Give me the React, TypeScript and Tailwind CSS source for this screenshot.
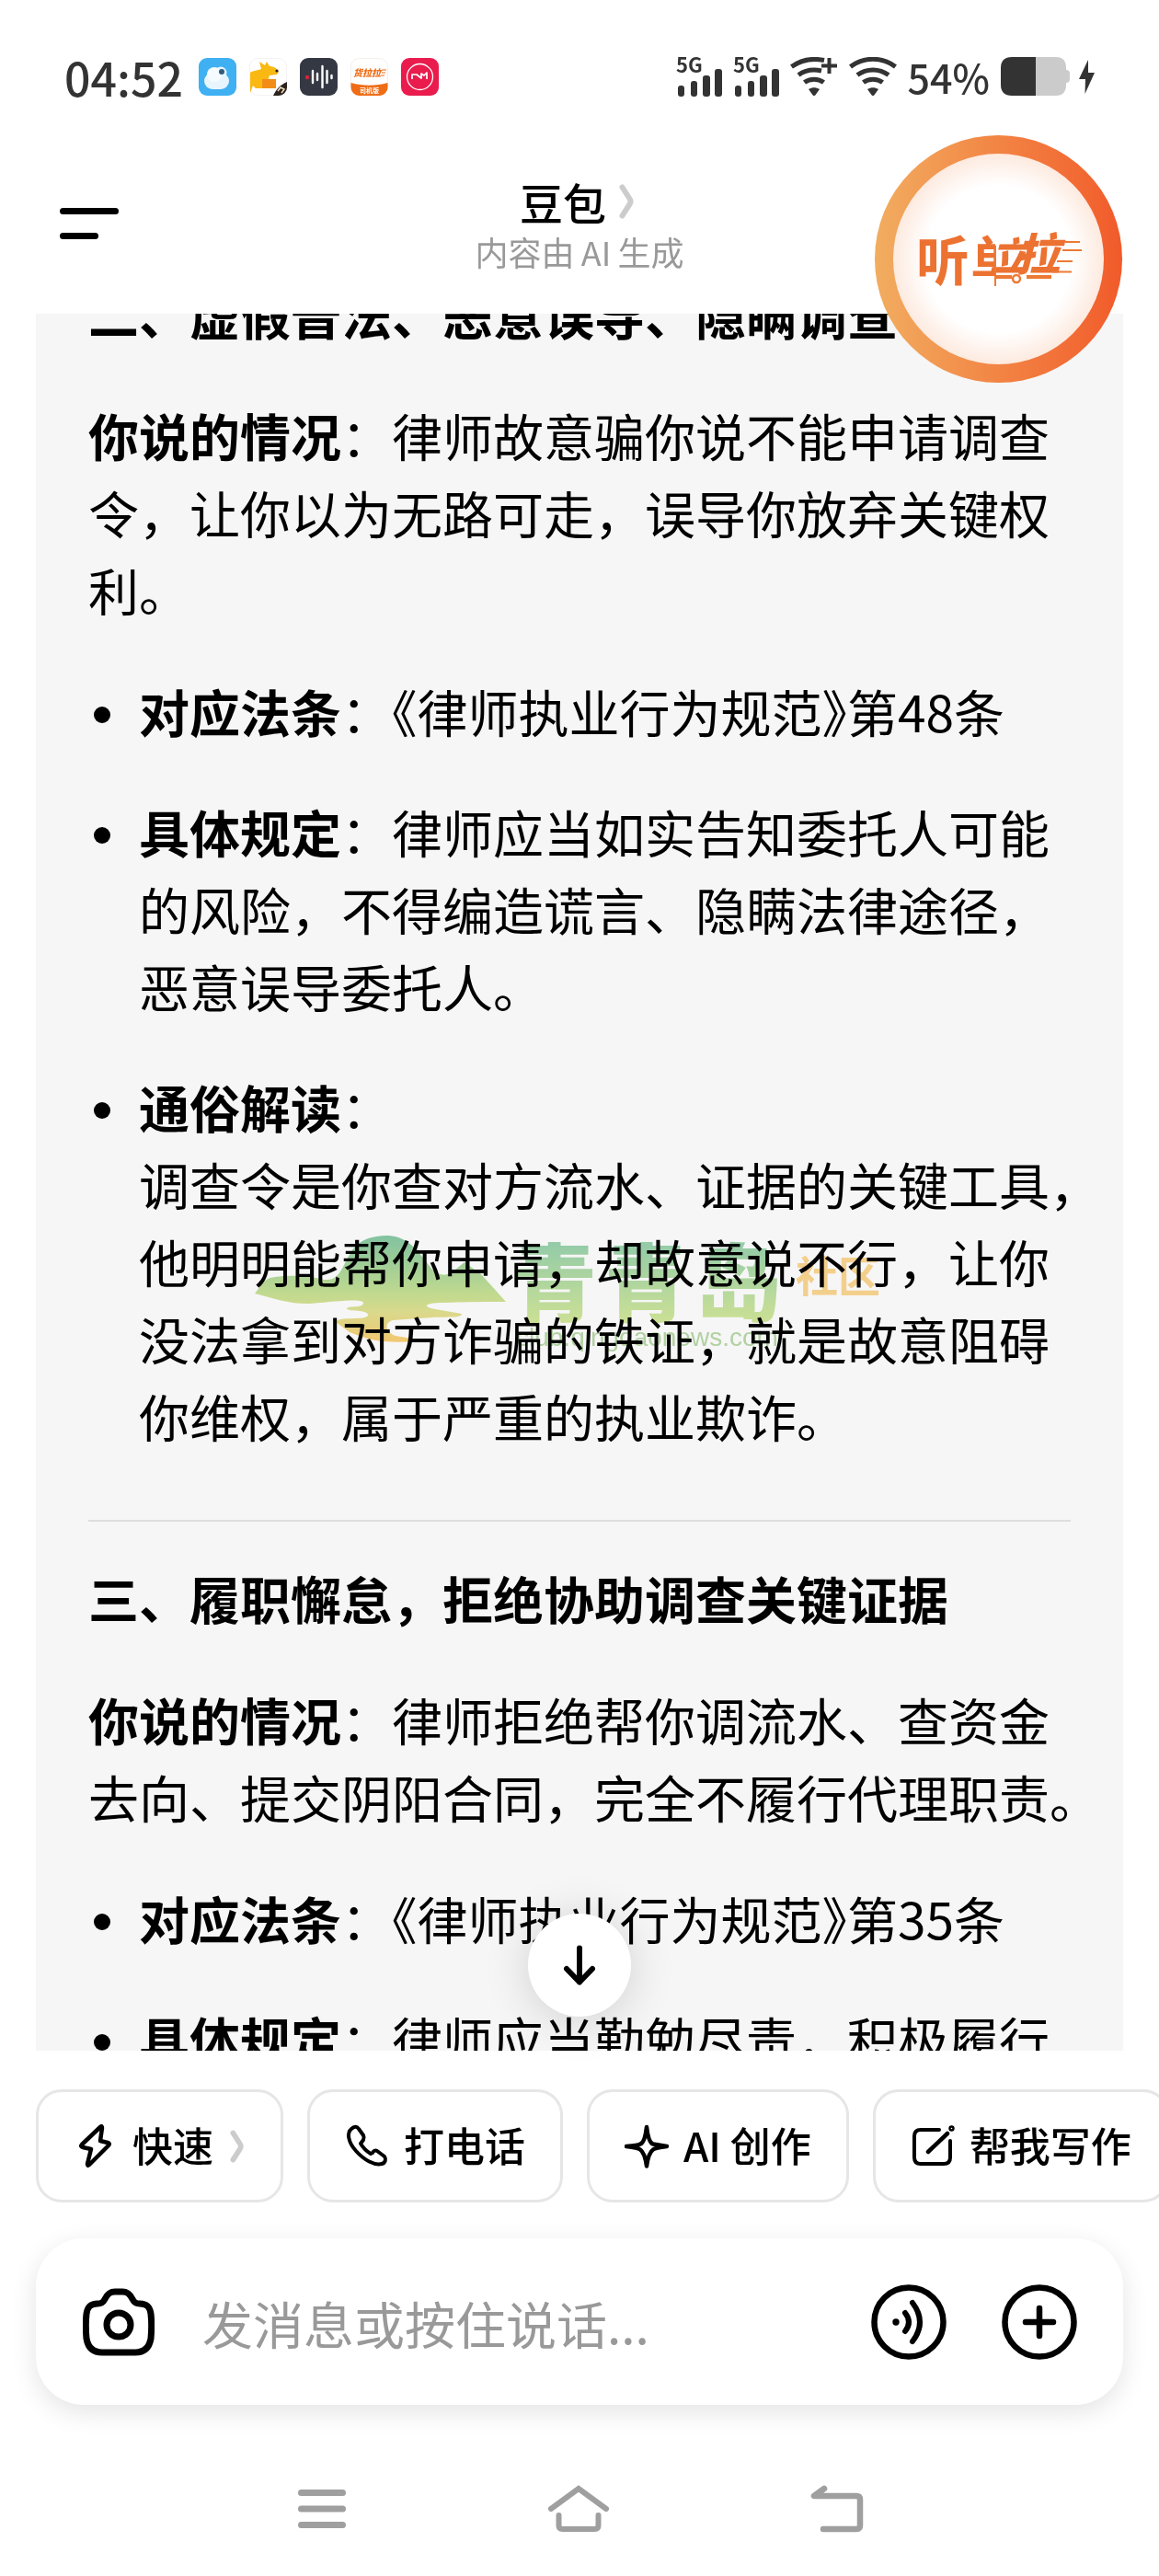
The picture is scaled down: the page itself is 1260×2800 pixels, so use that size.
import React from 'react';

const statusIcons = [
  { id: 'cloud', label: '天气', icon: <CloudApp /> },
  { id: 'roo', label: '众包', icon: <KangarooApp /> },
  { id: 'wave', label: '录音', icon: <WaveApp /> },
  { id: 'cargo', label: '司机版', icon: <CargoApp /> },
  { id: 'red', label: '地图', icon: <RedApp /> },
];

function CloudApp() {
  return (
    <svg viewBox="0 0 41 41" className="size-full">
      <rect width="41" height="41" rx="9" fill="#3fb0f2" />
      <circle cx="24" cy="16" r="6.5" fill="#e4f3fc" />
      <rect x="6" y="16" width="27" height="18" rx="9" fill="#e9f5fd" />
      <circle cx="17" cy="18" r="8" fill="#f6fbff" />
      <circle cx="25" cy="15" r="3" fill="#2f5b7c" />
    </svg>
  );
}

function KangarooApp() {
  return (
    <svg viewBox="0 0 41 41" className="size-full">
      <rect x="0.5" y="0.5" width="40" height="40" rx="9" fill="#fff" stroke="#f3f3f3" />
      <path d="M1 16c4-3 8-2 12-4l-2-8 6 4 2-4 3 5c4 0 8 2 10 6l-2 3-8 1-2 6-4 8H7l-3-3-3 8z" fill="#f9b912" />
      <circle cx="30" cy="14" r="1.6" fill="#222" />
      <path d="M14 23h15v10H14z" fill="#f28c16" />
      <path d="M41 26v6a9 9 0 0 1-9 9h-6c3-7 8-12 15-15z" fill="#2c231d" />
      <path d="M31 36l3-4 4 2-3 4" stroke="#f1dcc0" strokeWidth="1.5" fill="none" />
    </svg>
  );
}

function WaveApp() {
  return (
    <svg viewBox="0 0 41 41" className="size-full">
      <rect width="41" height="41" rx="9" fill="#343842" />
      <g strokeLinecap="round" strokeWidth="2.4" stroke="#fff">
        <path d="M14 14v13M19 17v7M24.5 9v23M29.5 14v13M34.5 19v3" />
      </g>
      <circle cx="8" cy="21" r="2.2" fill="#d8243f" />
    </svg>
  );
}

function CargoApp() {
  return (
    <svg viewBox="0 0 41 41" className="size-full">
      <rect x="0.5" y="0.5" width="40" height="40" rx="9" fill="#fff" stroke="#f6efe8" />
      <path d="M0.500 27c13 3.500 27 3.500 40 0v5a9 9 0 0 1-9 9h-22a9 9 0 0 1-9-9z" fill="#ee6d16" />
      <text x="3" y="20" fontSize="10" fontWeight="900" fontStyle="italic" fill="#ee6d16">货拉拉</text>
      <path d="M34 13h5M34 16h4M33 19h4" stroke="#ee6d16" strokeWidth="1" />
      <text x="10" y="38" fontSize="7" fontWeight="700" fill="#fff">司机版</text>
    </svg>
  );
}

function RedApp() {
  return (
    <svg viewBox="0 0 41 41" className="size-full">
      <rect width="41" height="41" rx="9" fill="#e91c4d" />
      <circle cx="20.500" cy="20.500" r="14" fill="none" stroke="#fff" strokeWidth="1.3" />
      <path d="M12 23v-5h5l5 4v-5l3 2 3-3v7" fill="none" stroke="#fff" strokeWidth="1.7" strokeLinejoin="round" />
    </svg>
  );
}

function Signal() {
  return (
    <svg viewBox="0 0 50 44" className="h-11 w-[50px] overflow-visible" fill="#333">
      <text x="0" y="18" fontSize="22" fontWeight="700">5G</text>
      <rect x="2" y="32" width="7" height="12" rx="3" />
      <rect x="16" y="27" width="7" height="17" rx="3" />
      <rect x="29" y="21" width="8" height="23" rx="3" />
      <rect x="42" y="14" width="8" height="30" rx="3" />
    </svg>
  );
}

function Wifi({ plus = false }: { plus?: boolean }) {
  return (
    <svg viewBox="0 0 52 42" className="h-[42px] w-[52px]">
      <g fill="none" stroke="#333" strokeWidth="5">
        <path d={plus ? 'M1.500 10.500C12 3 25 1 37 3.500' : 'M1.500 10.500C16-.5 36-.5 50.500 10.500'} />
        <path d={plus ? 'M9 19.500c7-5 16-6.500 25-4.500' : 'M9 19.500c10-7.500 24-7.500 34 0'} />
        <path d="M15.500 27.500c6-4.500 15-4.500 21 0" />
      </g>
      <path d="M20 35c4-2.500 8-2.500 12 0l-4.500 6.200a2 2 0 0 1-3 0z" fill="#333" />
      {plus && <path d="M34 9.500h17M42.500 1v17" stroke="#333" strokeWidth="4" />}
    </svg>
  );
}

function StatusBar() {
  return (
    <div className="flex h-[166px] shrink-0 items-start justify-between px-[70px] pt-[62px] text-[#333]">
      <div className="flex h-[42px] items-center">
        <span className="mr-[17px] text-[50px] leading-[42px] font-medium">04:52</span>
        <div className="flex gap-[14px]">
          {statusIcons.map((item) => (
            <span key={item.id} role="img" aria-label={item.label} className="size-[41px]">
              {item.icon}
            </span>
          ))}
        </div>
      </div>
      <div className="flex h-[42px] items-center gap-3">
        <Signal />
        <Signal />
        <Wifi plus />
        <Wifi />
        <span className="text-[43px] leading-[42px] font-medium">54%</span>
        <div className="flex items-center gap-[10px]">
          <svg viewBox="0 0 75 42" className="h-[42px] w-[75px]">
            <path d="M37 0h23q11 0 11 12v2q4 0 4 4v6q0 4-4 4v2q0 12-11 12H37z" fill="#cbcbcb" />
            <path d="M38 0H12Q0 0 0 12v18q0 12 12 12h26z" fill="#333" />
          </svg>
          <svg viewBox="0 0 17 37" className="h-[37px] w-[17px]" fill="#333">
            <path d="M10 0L0 21h7L6.500 37 17 14h-7z" />
          </svg>
        </div>
      </div>
    </div>
  );
}

function Header() {
  return (
    <header className="grid h-[175px] shrink-0 grid-cols-[1fr_auto_1fr] items-start px-[65px]">
      <button type="button" aria-label="菜单" className="mt-[60px] flex w-16 flex-col gap-5">
        <span className="h-[7px] w-16 rounded-full bg-black" />
        <span className="h-[7px] w-[42px] rounded-full bg-black" />
      </button>
      <div className="mt-[26px] flex flex-col items-center">
        <h1 className="flex items-center gap-[14px] pr-1 text-[47px] leading-[54px] font-medium text-black">
          豆包
          <Chevron className="h-[38px] w-[18px]" />
        </h1>
        <p className="text-[36px] leading-[54px] text-[#999]">内容由{'\u2009'}AI{'\u2009'}生成</p>
      </div>
    </header>
  );
}

function Chevron({ className }: { className: string }) {
  return (
    <svg viewBox="0 0 18 38" className={className} fill="none">
      <path d="M3.500 3.500l8 12.500q2 3 0 6l-8 12.500" stroke="#ccc" strokeWidth="6" strokeLinecap="round" />
    </svg>
  );
}

function FloatingBadge() {
  return (
    <button
      type="button"
      aria-label="听单"
      className="absolute top-[147px] right-[40px] z-20 size-[269px] rounded-full bg-linear-to-r from-[#f1ad60] via-[#f28444] to-[#f15a2a] p-5"
    >
      <span className="block size-full rounded-full bg-white bg-[radial-gradient(closest-side,#fff_70%,#fdeadf_100%)]">
        <svg viewBox="0 0 229 229" className="size-full">
          <defs>
            <clipPath id="halfChar">
              <rect x="84" y="80" width="27" height="53" />
            </clipPath>
          </defs>
          <g fill="#ec7232">
            <text x="25" y="138" fontSize="58" fontWeight="700">听</text>
            <text x="84" y="138" fontSize="58" fontWeight="700" clipPath="url(#halfChar)">单</text>
            <text x="105" y="127" fontSize="42" fontWeight="900" fontStyle="italic">立</text>
            <text x="133" y="127" fontSize="48" fontWeight="900" fontStyle="italic">拉</text>
          </g>
          <g stroke="#ec7a35" strokeWidth="2" fill="none">
            <path d="M187 96h16M184 105h21M178 117h17M173 128.500h21M111 100v44" />
            <path d="M111 134h18M145 134h27" strokeWidth="4" />
            <circle cx="134" cy="136" r="4" strokeWidth="2.500" fill="#fff" />
          </g>
        </svg>
      </span>
    </button>
  );
}

function Watermark() {
  return (
    <div className="pointer-events-none absolute inset-0 flex items-center justify-center mix-blend-multiply">
      <svg viewBox="0 0 706 140" className="h-[140px] w-[706px]" aria-hidden="true">
        <defs>
          <linearGradient id="hill" x1="0" x2="0" y1="0" y2="1">
            <stop offset="0" stopColor="#86c9a6" />
            <stop offset="0.55" stopColor="#c8e294" />
            <stop offset="0.72" stopColor="#e2e191" />
            <stop offset="1" stopColor="#fbcf74" />
          </linearGradient>
          <linearGradient id="wordmark" gradientUnits="userSpaceOnUse" x1="0" x2="0" y1="25" y2="105">
            <stop offset="0" stopColor="#9bd4ad" />
            <stop offset="1" stopColor="#d2e89b" />
          </linearGradient>
        </defs>
        <path
          fill="url(#hill)"
          d="M0 76C8 66 10 59 22 58q22-3 45 1c16 5 22 1 29-12 8-14 12-34 49-34 24 1 36 22 48 37 10 9 18 6 25 0l10-8 18 13 27 30c-22 0-45 0-67 1-24 0-23 5-10 7l29 5c0 5-16 3-32 4l-43 3c-10 3-8 13 3 17l30 5c-14 2-29 2-43 1-13-1-25-5-37-10L88 107c4-7 30-1 35-7 2-7-23-4-23-8 3-3 16 0 18-5 1-6-22-3-58 0-18 1-38-5-60-11z"
        />
        <g fill="url(#wordmark)" fontSize="92" fontWeight="900">
          <text x="280" y="99">青</text>
          <text x="380" y="99">青</text>
          <text x="480" y="99">岛</text>
        </g>
        <text x="588" y="74" fontSize="46" fontWeight="700" fill="#fcd791">社区</text>
        <text x="284" y="133" fontSize="28" fill="#b9d9a8" className="font-['Liberation_Sans',sans-serif]">
          club.qingdaonews.com
        </text>
      </svg>
    </div>
  );
}

function Bullet({ children }: { children: React.ReactNode }) {
  return (
    <li className="flex">
      <span className="flex h-[84px] w-[55px] shrink-0 items-center pt-2.5 pl-1.5">
        <span className="size-[18px] rounded-full bg-black" />
      </span>
      <div>{children}</div>
    </li>
  );
}

function LawTitle({ article }: { article: string }) {
  return (
    <>
      <b>对应法条</b>：《律师执业行为规范<span className="[font-feature-settings:'halt']">》</span>
      {article}
    </>
  );
}

function Answer() {
  return (
    <article className="-mt-[43px] flex flex-col gap-12 px-[57px] text-[55px] leading-[84px] whitespace-nowrap text-black">
      <h2 className="font-bold">二、虚假普法、恶意误导、隐瞒调查令</h2>
      <p>
        <b>你说的情况</b>：律师故意骗你说不能申请调查<br />
        令，让你以为无路可走，误导你放弃关键权<br />
        利。
      </p>
      <ul className="flex flex-col gap-[47px]">
        <Bullet>
          <LawTitle article="第48条" />
        </Bullet>
        <Bullet>
          <b>具体规定</b>：律师应当如实告知委托人可能<br />
          的风险，不得编造谎言、隐瞒法律途径，<br />
          恶意误导委托人。
        </Bullet>
        <Bullet>
          <b>通俗解读</b>：<br />
          调查令是你查对方流水、证据的关键工具，<br />
          他明明能帮你申请，却故意说不行，让你<br />
          没法拿到对方诈骗的铁证，就是故意阻碍<br />
          你维权，属于严重的执业欺诈。
        </Bullet>
      </ul>
      <hr className="mt-6 -mb-2 border-t-2 border-[#dedede]" />
      <h2 className="font-bold">三、履职懈怠，拒绝协助调查关键证据</h2>
      <p>
        <b>你说的情况</b>：律师拒绝帮你调流水、查资金<br />
        去向、提交阴阳合同，完全不履行代理职责。
      </p>
      <ul className="flex flex-col gap-[47px]">
        <Bullet>
          <LawTitle article="第35条" />
        </Bullet>
        <Bullet>
          <b>具体规定</b>：律师应当勤勉尽责，积极履行
        </Bullet>
      </ul>
    </article>
  );
}

const iconProps = {
  viewBox: '0 0 48 48',
  className: 'size-12 shrink-0',
  fill: 'none',
  stroke: 'currentColor',
  strokeWidth: 4.5,
  strokeLinecap: 'round',
  strokeLinejoin: 'round',
} as const;

const chips = [
  {
    label: '快速',
    more: true,
    icon: (
      <svg {...iconProps}>
        <path d="M29 3L9 22q-2 2 1 3l9 2-4 16q0 3 2 1l21-21q2-2-1-3l-8-2 2-14q0-3-2-1z" />
      </svg>
    ),
  },
  {
    label: '打电话',
    icon: (
      <svg {...iconProps} strokeWidth={4}>
        <path d="M7 5C2 9 3 19 12 29c9 10 20 16 28 14 4-1 5-5 3-8l-8-6c-2-1-4 0-5 2l-2 1c-5-3-8-6-11-11l3-4c1-2 1-3 0-5l-5-7c-2-3-5-3-8 0z" />
      </svg>
    ),
  },
  {
    label: 'AI 创作',
    icon: (
      <svg {...iconProps}>
        <path d="M24 3q2 17 7 18.500L46 24q-13 1.500-15 3.500-5 3.500-7 18-2-14.500-7-18Q15 25.500 2 24q13-1 15-2.500Q22 20 24 3z" />
      </svg>
    ),
  },
  {
    label: '帮我写作',
    icon: (
      <svg {...iconProps} strokeWidth={4}>
        <path d="M31 6H11q-7 0-7 7v23q0 7 7 7h25q7 0 7-7V18" />
        <path d="M19 30L40 10" strokeWidth="4.500" />
        <circle cx="44.500" cy="4.500" r="1.200" />
      </svg>
    ),
  },
];

function QuickActions() {
  return (
    <div className="flex gap-[26px] overflow-hidden pt-[42px] pl-[39px]">
      {chips.map((chip) => (
        <button
          key={chip.label}
          type="button"
          className="flex h-[123px] shrink-0 items-center rounded-[28px] border-3 border-[#e6e6e6] bg-white px-[38px] text-[44px] font-medium text-black"
        >
          {chip.icon}
          <span className="ml-4 pb-1">{chip.label}</span>
          {chip.more && <Chevron className="ml-[18px] h-9 w-[17px]" />}
        </button>
      ))}
    </div>
  );
}

function Composer() {
  return (
    <form className="mx-[39px] mt-[39px] flex h-[181px] items-center rounded-[52px] bg-white pr-[50px] pl-[51px] shadow-[0_8px_28px_rgba(0,0,0,0.11)]">
      <button type="button" aria-label="拍照" className="shrink-0">
        <svg viewBox="0 0 78 74" className="h-[74px] w-[78px]" fill="none" stroke="#000" strokeWidth="7">
          <path d="M24 12c3-6 6-8 11-8h8c5 0 8 2 11 8 2 4 4 5 8 5 8 0 11 4 12 11 1 9 1 16 0 27-2 11-8 15-17 15H21C12 70 6 66 4 55c-1-11-1-18 0-27 1-7 4-11 12-11 4 0 6-1 8-5z" />
          <circle cx="39" cy="40" r="13" />
        </svg>
      </button>
      <input
        type="text"
        aria-label="消息"
        placeholder="发消息或按住说话..."
        className="ml-[52px] h-full min-w-0 flex-1 text-[55px] text-black outline-none placeholder:text-[#999]"
      />
      <div className="flex shrink-0 gap-[60px]">
        <button type="button" aria-label="语音">
          <svg viewBox="0 0 82 82" className="size-[82px]" fill="none" stroke="#000" strokeWidth="6.500" strokeLinecap="round">
            <circle cx="41" cy="41" r="37.500" />
            <circle cx="27" cy="41" r="3.700" fill="#000" stroke="none" />
            <path d="M37 31q8 10 0 20M45 20q16 21 0 42" strokeWidth="6" />
          </svg>
        </button>
        <button type="button" aria-label="更多">
          <svg viewBox="0 0 82 82" className="size-[82px]" fill="none" stroke="#000" strokeWidth="6.500" strokeLinecap="round">
            <circle cx="41" cy="41" r="37.500" />
            <path d="M41 26v30M26 41h30" />
          </svg>
        </button>
      </div>
    </form>
  );
}

function NavBar() {
  return (
    <nav className="mt-10 flex h-[146px] items-center justify-center gap-[218px] text-[#9f9f9f]">
      <button type="button" aria-label="最近任务">
        <svg viewBox="0 0 56 50" className="h-[50px] w-[56px]" stroke="currentColor" strokeWidth="7" strokeLinecap="round">
          <path d="M6.500 7.500h45M6.500 25h45M6.500 42.500h45" />
        </svg>
      </button>
      <button type="button" aria-label="主屏幕">
        <svg viewBox="0 0 68 52" className="h-[52px] w-[68px]" fill="none" stroke="currentColor" strokeWidth="6" strokeLinecap="round">
          <path d="M4 26L34 4l30 22" />
          <path d="M12.500 33v11q0 4 4 4h35q4 0 4-4V33" />
        </svg>
      </button>
      <button type="button" aria-label="返回">
        <svg viewBox="0 0 58 52" className="h-[52px] w-[58px]" fill="none" stroke="currentColor" strokeWidth="6.500" strokeLinecap="round" strokeLinejoin="round">
          <path d="M15 4L4 12h46q4 0 4 4v28q0 4-4 4H14" />
        </svg>
      </button>
    </nav>
  );
}

export default function App() {
  return (
    <div
      lang="zh-CN"
      className="relative flex h-screen flex-col overflow-hidden bg-white font-['Noto_Sans_CJK_SC',sans-serif]"
    >
      <StatusBar />
      <Header />
      <FloatingBadge />

      <main className="relative mx-[39px] min-h-0 flex-1">
        <div className="h-full overflow-hidden bg-[#f6f6f6]">
          <Answer />
        </div>
        <div className="absolute inset-x-0 bottom-[37px] flex justify-center">
          <button
            type="button"
            aria-label="回到底部"
            className="flex size-28 items-center justify-center rounded-full bg-white shadow-[0_4px_50px_rgba(0,0,0,0.16)]"
          >
            <svg viewBox="0 0 36 44" className="h-11 w-9" fill="none" stroke="#000" strokeWidth="6" strokeLinecap="round" strokeLinejoin="round">
              <path d="M18 3.500v37M4 26l14 14.500L32 26" />
            </svg>
          </button>
        </div>
      </main>

      <footer className="shrink-0">
        <QuickActions />
        <Composer />
        <NavBar />
      </footer>

      <Watermark />
    </div>
  );
}
